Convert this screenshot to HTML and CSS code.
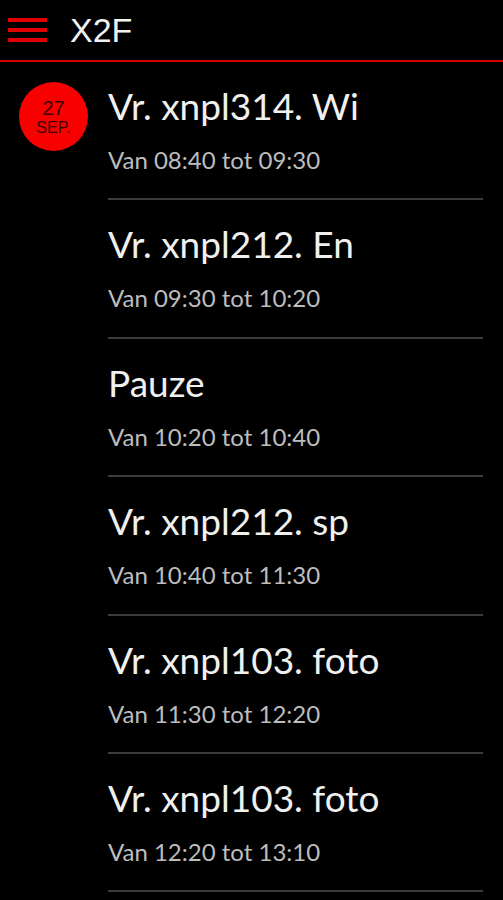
FILE: index.html
```html
<!DOCTYPE html>
<html lang="nl">

<head>
  <meta charset="UTF-8" />
  <meta name="viewport" content="width=device-width, initial-scale=1.0" />
  <title>X2F | Rooster</title>
  <link rel="stylesheet" href="styles.css">
</head>

<body>
  <header class="topbar">
    <button class="menu-btn" type="button" aria-label="Menu">
      <span></span>
      <span></span>
      <span></span>
    </button>
    <h1 class="app-title">X2F</h1>
  </header>
  <div id="main">
    <div class="day">
      <div class="date-badge">
        <span class="date-num">27</span>
        <span class="date-month">SEP.</span>
      </div>
    </div>
    <ul class="lessons">
      <li class="lesson">
        <h2>Vr. xnpl314. Wi</h2>
        <p>Van 08:40 tot 09:30</p>
      </li>
      <li class="lesson">
        <h2>Vr. xnpl212. En</h2>
        <p>Van 09:30 tot 10:20</p>
      </li>
      <li class="lesson">
        <h2>Pauze</h2>
        <p>Van 10:20 tot 10:40</p>
      </li>
      <li class="lesson">
        <h2>Vr. xnpl212. sp</h2>
        <p>Van 10:40 tot 11:30</p>
      </li>
      <li class="lesson">
        <h2>Vr. xnpl103. foto</h2>
        <p>Van 11:30 tot 12:20</p>
      </li>
      <li class="lesson">
        <h2>Vr. xnpl103. foto</h2>
        <p>Van 12:20 tot 13:10</p>
      </li>
    </ul>
  </div>
</body>

</html>
```

FILE: styles.css
```css
body {
  margin: 0;
  background: #000;
  color: #eee;
  font-family: Lato, "Liberation Sans", sans-serif;
  overflow: hidden;
}

.topbar {
  display: flex;
  align-items: center;
  height: 60px;
  border-bottom: 2px solid #d40000;
}

.menu-btn {
  display: flex;
  flex-direction: column;
  gap: 6px;
  width: 39px;
  margin-left: 8px;
  padding: 0;
  border: none;
  background: none;
}

.menu-btn span {
  display: block;
  height: 4px;
  background: #e30000;
}

.app-title {
  margin: 0 0 0 23px;
  font-family: "Liberation Sans", Arial, sans-serif;
  font-weight: normal;
  font-size: 34px;
  color: #f2f2f2;
}

#main {
  display: flex;
}

.day {
  width: 108px;
  flex-shrink: 0;
}

.date-badge {
  display: flex;
  flex-direction: column;
  align-items: center;
  justify-content: center;
  width: 69px;
  height: 69px;
  margin: 20px 0 0 19px;
  border-radius: 50%;
  background: #f80000;
  color: #3a0000;
  font-family: "Liberation Sans", Arial, sans-serif;
  line-height: 1;
}

.date-num {
  font-size: 20px;
}

.date-month {
  font-size: 16px;
  margin-top: 2px;
}

.lessons {
  flex: 1;
  margin: 0 20px 0 0;
  padding: 0;
  list-style: none;
}

.lesson {
  padding: 24px 0 24.4px;
  border-bottom: 2px solid #3c3c3c;
}

.lesson h2 {
  margin: 0;
  font-weight: normal;
  font-size: 37px;
  line-height: 40px;
  color: #f0f0f0;
}

.lesson p {
  margin: 20px 0 0;
  font-size: 24px;
  line-height: 28px;
  color: #bdbdbd;
}
```
